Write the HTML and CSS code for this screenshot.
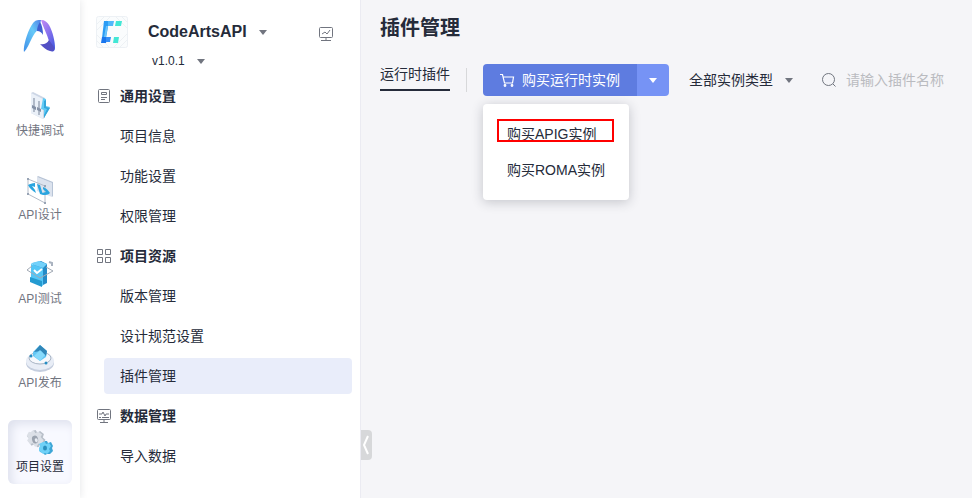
FILE: index.html
```html
<!DOCTYPE html>
<html lang="zh-CN">
<head>
<meta charset="utf-8">
<title>插件管理</title>
<link rel="stylesheet" href="styles.css">
</head>
<body>
<div class="app">
  <nav class="rail">
    <a class="rail-logo" href="#" aria-label="CodeArts">
      <svg width="36" height="36" viewBox="0 0 36 36">
        <defs>
          <linearGradient id="lg1" x1="1" y1="0" x2="0" y2="1"><stop offset="0" stop-color="#4f7fe6"/><stop offset=".4" stop-color="#66c9f8"/><stop offset="1" stop-color="#3f8fe8"/></linearGradient>
          <linearGradient id="lg2" x1="0" y1="0" x2=".7" y2="1"><stop offset="0" stop-color="#c58af3"/><stop offset=".5" stop-color="#8a72ee"/><stop offset="1" stop-color="#4a5be0"/></linearGradient>
        </defs>
        <path d="M2 34C1 27 7 9 12 4c2-2 4-2 7-2l-2 9c-3 2-5 5-7 9-3 6-5 11-8 14z" fill="url(#lg1)"/>
        <path d="M18 4c2 3 3 8 3 13-1-2-3-4-6-4 0-3 1-6 3-9z" fill="#3f5fd0"/>
        <path d="M19 2c4 0 6 2 8 5 4 7 6 17 6 23 0 3-2 4-4 3l-2-10C25 16 21 9 19 2z" fill="url(#lg2)"/>
        <path d="M18 26c3 1 7 0 9-4l5 7c1 4-1 5-4 4-4-1-7-4-10-7z" fill="#5350c4"/>
      </svg>
    </a>
    <a class="rail-item" href="#">
      <svg width="28" height="28" viewBox="0 0 28 28">
        <path d="M5 1l2-1 12 6v19l-2 2L5 21z" fill="#ccd6e5"/><path d="M5 1l12 6v20L5 21z" fill="#eaf0f8"/>
        <path d="M8 6v14M13 9v14" stroke="#929daf" stroke-width="1.3"/><path d="M6 13l4 2v3l-4-2zM11 15l4 2v3l-4-2z" fill="#8491a6"/>
        <path d="M17 6l3 1v7l4 1-6 11v-8l-3-1z" fill="#62cbf5"/><path d="M20 8v7l4 1-6 10v-3l3-6-3-1V9z" fill="#35a6da"/>
      </svg><span>快捷调试</span>
    </a>
    <a class="rail-item" href="#">
      <svg width="28" height="28" viewBox="0 0 28 28">
        <path d="M11 1l15 6v14l-15-6z" fill="#dce3ee"/><path d="M11 1l1-1 15 6v14l-1 1V7z" fill="#b7c4d6"/>
        <path d="M2 3l17 7v17L2 18z" fill="none" stroke="#b4bcc8"/>
        <path d="M9 7c-3 0-5 1-7 2 2 4 5 6 8 8l-1-3-3-4 3 1zM11 8l3 1 3 10-3-1zM17 11c3 1 5 3 7 6-2 2-4 2-7 2l-1-2 4-1-3-3z" fill="#2ba5df"/>
        <path d="M1 2h2v2H1zM18 9h2v2h-2zM1 17h2v2H1zM18 26h2v2h-2z" fill="#98a4b5"/>
      </svg><span>API设计</span>
    </a>
    <a class="rail-item" href="#">
      <svg width="28" height="28" viewBox="0 0 28 28">
        <path d="M7 3l8-2 6 3v19l-4 2-10-4z" fill="#258bc7"/><path d="M5 4l12 4v18L5 20z" fill="#54c6f6"/><path d="M4 17l12 4v6L4 22z" fill="#249bd1"/><path d="M6 3l7-2 8 3-4 4-12-4z" fill="#72d1fa"/>
        <path d="M6 6L1 10l13 8 13-7-7-4" fill="none" stroke="#a1a9b4"/><path d="M8 10l3 3 5-4" fill="none" stroke="#fff" stroke-width="2"/><path d="M23 2l3 1v3" fill="none" stroke="#a9b2bf" stroke-width="2"/>
      </svg><span>API测试</span>
    </a>
    <a class="rail-item" href="#">
      <svg width="28" height="28" viewBox="0 0 28 28">
        <ellipse cx="14" cy="19" rx="14" ry="9" fill="#c5cede"/><ellipse cx="14" cy="17" rx="14" ry="9" fill="#e8edf6"/>
        <ellipse cx="14" cy="14" rx="11" ry="6" fill="#f6f8fc" stroke="#a8b4c4"/><path d="M14 1l7 6-1 6-6 4-7-5V8z" fill="#63c7f5"/><path d="M14 1l7 6-1 5-5-5-7 1z" fill="#3187b9"/><path d="M14 6l5 5-5 6-6-5z" fill="#86dafc"/><circle cx="5" cy="12" r="1.500" fill="#268dc3"/><circle cx="20" cy="19" r="1.500" fill="#268dc3"/>
      </svg><span>API发布</span>
    </a>
    <a class="rail-item active" href="#" aria-current="page">
      <svg width="28" height="28" viewBox="0 0 28 28">
        <g transform="translate(1 1) rotate(-15 10 10)"><path d="M8 1h3l1 3 3-1 3 4-2 3 2 3-3 3-3-1-2 3H8l-1-4-4 1-2-5 2-2-2-3 3-3 3 1z" fill="#b9c0ca"/><path d="M7 1h2l1 3 3-1 3 4-2 2 2 4-3 3-3-1-2 2H6l-1-4-3 0-2-4 2-2-1-3 3-3 2 1z" fill="#dce0e7"/><ellipse cx="8" cy="10" rx="3" ry="4" fill="#9ba3af"/><ellipse cx="9" cy="11" rx="1.500" ry="2" fill="#e9edf3"/></g>
        <path d="M19 13h2l1 2 3-1 2 4-1 2 1 3-3 3h-3l-2 1-2-2-3-1-1-3 2-2-1-3 3-1z" fill="#3da6d6"/><path d="M17 14h2l1 2 3-1 2 3-2 3 1 2-3 3-2-1-2 1-2-2-2-1v-3l1-2-1-2 2-1z" fill="#6fd1f7"/><ellipse cx="19" cy="20" rx="2" ry="2.500" fill="#2a8fbe"/>
      </svg><span>项目设置</span>
    </a>
  </nav>

  <aside class="side">
    <header class="project">
      <svg class="project-logo" width="32" height="32" viewBox="0 0 32 32">
        <rect x=".5" y=".5" width="31" height="31" rx="2" fill="#fafcfd" stroke="#edf1f5"/>
        <path d="M1 8l7-7M1 14L14 1M1 25l7 7M18 31l13-13M24 31l7-7M20 1l11 11M26 1l5 5M1 19l12 12" stroke="#edf1f4" fill="none"/>
        <path d="M8 5h5l-3 17H6z" fill="#2b9cf5"/><path d="M12 5h6l-1 5h-5z" fill="#52b8fb"/><path d="M6 21h5l-1 6H5z" fill="#1976ee"/><path d="M10 21h5l-1 5h-4z" fill="#348ef6"/><path d="M10 10l2 0-2 11H8z" fill="#68c3fa"/>
        <path d="M20 5h6l-1 5h-6zM18 21h5l-1 6h-5z" fill="#43e7d5"/>
      </svg>
      <div class="project-info">
        <button class="project-name" type="button">CodeArtsAPI <i class="caret"></i></button>
        <button class="project-version" type="button">v1.0.1 <i class="caret"></i></button>
      </div>
      <button class="icon-button" type="button" aria-label="项目看板">
        <svg width="14" height="14" viewBox="0 0 14 14" fill="none" stroke="#71757f"><rect x=".5" y=".5" width="13" height="10" rx="1"/><path d="M3 7l3-2 2 2 3-4M7 11v2M2 13.500h10"/></svg>
      </button>
    </header>
    <nav class="menu">
      <h2 class="menu-heading">
        <svg width="16" height="16" viewBox="0 0 16 16" fill="none" stroke="#71757f"><rect x="2.500" y="1.500" width="11" height="13" rx="1"/><path d="M5.500 4.500h5v2h-5zM5 9.500h6M5 11.500h4"/></svg>通用设置</h2>
      <a class="menu-item" href="#">项目信息</a>
      <a class="menu-item" href="#">功能设置</a>
      <a class="menu-item" href="#">权限管理</a>
      <h2 class="menu-heading">
        <svg width="16" height="16" viewBox="0 0 16 16" fill="none" stroke="#71757f"><path d="M1.500 1.500h5v5h-5zM9.500 1.500h5v5h-5zM1.500 9.500h5v5h-5zM9.500 9.500h5v5h-5z"/></svg>项目资源</h2>
      <a class="menu-item" href="#">版本管理</a>
      <a class="menu-item" href="#">设计规范设置</a>
      <a class="menu-item selected" href="#" aria-current="page">插件管理</a>
      <h2 class="menu-heading">
        <svg width="16" height="16" viewBox="0 0 16 16" fill="none" stroke="#71757f"><rect x="1.500" y="1.500" width="13" height="10" rx="1"/><path d="M3 6h3l1-2 2 4 1-2h3M3 9.500h2M6 9.500h7M8 12v2M4 14.500h8"/></svg>数据管理</h2>
      <a class="menu-item" href="#">导入数据</a>
    </nav>
    <button class="collapse" type="button" aria-label="收起菜单">
      <svg width="11" height="30" viewBox="0 0 11 30" fill="none" stroke="#fff" stroke-width="2"><path d="M7 6L3 15l4 9"/></svg>
    </button>
  </aside>

  <main class="main">
    <h1>插件管理</h1>
    <div class="toolbar">
      <a class="tab" href="#">运行时插件</a>
      <div class="buy">
        <button class="buy-main" type="button">
          <svg width="15" height="15" viewBox="0 0 15 15" fill="none" stroke="#fff" stroke-width="1.2"><path d="M0 1.500h2.500L4.500 10h8l1-6H3.200"/><circle cx="5" cy="12.500" r=".8"/><circle cx="12" cy="12.500" r=".8"/></svg>购买运行时实例</button>
        <button class="buy-more" type="button" aria-label="更多购买选项" aria-expanded="true"><i class="caret"></i></button>
        <div class="dropdown">
          <a class="dropdown-item highlighted" href="#">购买APIG实例</a>
          <a class="dropdown-item" href="#">购买ROMA实例</a>
        </div>
      </div>
      <div class="filter">
        <select aria-label="实例类型"><option>全部实例类型</option></select>
        <i class="caret"></i>
      </div>
      <label class="search">
        <svg width="16" height="16" viewBox="0 0 16 16" fill="none" stroke="#71757f"><circle cx="7.500" cy="7.500" r="6"/><path d="M12 12l2.500 2.500"/></svg>
        <input type="text" placeholder="请输入插件名称" aria-label="插件名称">
      </label>
    </div>
  </main>
</div>
</body>
</html>
```
FILE: styles.css
```css
* {
  box-sizing: border-box;
}

body {
  margin: 0;
  font-family: "Liberation Sans", "Noto Sans CJK SC", sans-serif;
  font-size: 14px;
  line-height: 20px;
  color: #252b3a;
  background: #f5f5f8;
}

a {
  color: inherit;
  text-decoration: none;
}

button,
input,
select {
  margin: 0;
  padding: 0;
  border: 0;
  background: none;
  font: inherit;
  color: inherit;
}

svg {
  display: block;
  flex: none;
}

h1,
h2 {
  margin: 0;
}

.caret {
  flex: none;
  border: 4px solid transparent;
  border-top: 5px solid #71757f;
  border-bottom: 0;
}

.app {
  display: grid;
  grid-template-columns: 80px 281px 1fr;
  min-height: 100vh;
}

.rail {
  display: flex;
  flex-direction: column;
  gap: 20px;
  padding: 0 8px;
  background: #fff;
  box-shadow: 0 0 8px rgba(37, 43, 58, 0.12);
  z-index: 1;
}

.rail-logo {
  display: flex;
  justify-content: center;
  height: 64px;
  padding-top: 18px;
}

.rail-item {
  display: flex;
  flex-direction: column;
  align-items: center;
  gap: 1px;
  height: 64px;
  padding-top: 8px;
  border-radius: 6px;
  font-size: 12px;
  color: #71757f;
}

.rail-item.active {
  color: #252b3a;
  background: #f8f9ff;
  box-shadow: inset 4px 4px 10px #dfe2ee;
}

.side {
  position: relative;
  background: #fff;
  border-right: 1px solid #ebebf2;
}

.project {
  display: flex;
  align-items: flex-start;
  height: 76px;
  padding: 16px 27px 0 16px;
}

.project-info {
  flex: 1;
  padding: 6px 0 0 20px;
}

.project-name,
.project-version {
  display: flex;
  align-items: center;
  gap: 12px;
}

.project-name {
  font-size: 16px;
  font-weight: bold;
}

.project-version {
  margin: 9px 0 0 4px;
  font-size: 12px;
}

.icon-button {
  padding-top: 11px;
}

.menu {
  display: flex;
  flex-direction: column;
  padding: 0 8px 0 16px;
}

.menu-heading {
  display: flex;
  align-items: center;
  gap: 8px;
  height: 40px;
  font-size: 14px;
}

.menu-item {
  margin: 2px 0 2px 8px;
  padding: 8px 16px;
  border-radius: 4px;
}

.selected {
  background: #e9edfa;
}

.collapse {
  position: absolute;
  top: 430px;
  right: -12px;
  border-radius: 0 4px 4px 0;
  background: #d7d8da;
}

.main {
  padding: 12px 19px;
}

h1 {
  font-size: 20px;
  line-height: 32px;
}

.toolbar {
  display: flex;
  align-items: flex-start;
  padding-top: 20px;
}

.tab {
  padding-bottom: 5px;
  border-bottom: 2px solid #252b3a;
}

.buy {
  position: relative;
  display: flex;
  height: 32px;
  margin-left: 33px;
  color: #fff;
}

.buy::before {
  content: "";
  position: absolute;
  left: -17px;
  top: 4px;
  height: 24px;
  border-left: 1px solid #d7d8da;
}

.buy-main {
  display: flex;
  align-items: center;
  gap: 7px;
  padding: 0 17px;
  border-radius: 4px 0 0 4px;
  background: #5e7ce0;
}

.buy-more {
  display: flex;
  align-items: center;
  justify-content: center;
  width: 32px;
  border-radius: 0 4px 4px 0;
  background: #7693f5;
}

.buy-more .caret {
  border-top-color: #fff;
}

.dropdown {
  position: absolute;
  top: 40px;
  left: 0;
  width: 146px;
  padding: 12px 0;
  border-radius: 4px;
  background: #fff;
  color: #252b3a;
  box-shadow: 0 2px 12px rgba(37, 43, 58, 0.24);
}

.dropdown-item {
  position: relative;
  display: block;
  padding: 8px 24px;
}

.highlighted::after {
  content: "";
  position: absolute;
  inset: 3px 15px 10px 14px;
  border: 2px solid #f00;
}

.filter {
  display: flex;
  align-items: center;
  gap: 12px;
  margin-left: 20px;
}

.filter select {
  appearance: none;
  height: 32px;
}

.search {
  display: flex;
  flex: 1;
  align-items: center;
  gap: 9px;
  min-width: 0;
  margin-left: 28px;
}

.search input {
  flex: 1;
  min-width: 0;
  height: 32px;
}

.search input::placeholder {
  color: #babbc0;
  opacity: 1;
}
```
